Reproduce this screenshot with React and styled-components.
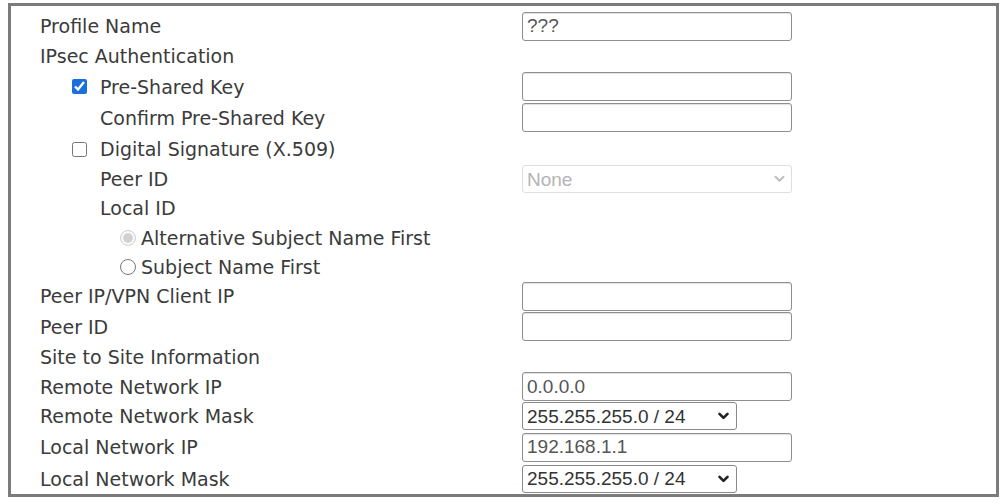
import React from "react";
import styled, { createGlobalStyle } from "styled-components";

const Global = createGlobalStyle`
  html, body { margin: 0; padding: 0; background: #fff; }
  body { font-family: "DejaVu Sans", Verdana, sans-serif; }
`;

const Page = styled.div`
  padding: 3px 0 0 8px;
`;

const Frame = styled.div`
  box-sizing: border-box;
  width: 991px;
  border: 3px solid #7b7b7b;
  padding: 5px 0 0 29px;
  background: #fff;
`;

const Row = styled.div`
  display: grid;
  grid-template-columns: 482px 1fr;
  align-items: center;
  height: ${(p) => p.$h || 30}px;
`;

const Label = styled.div`
  display: flex;
  align-items: center;
  padding-left: ${(p) => p.$indent || 0}px;
  font-size: 19px;
  color: #3b3b3b;
  white-space: nowrap;
`;

const Check = styled.input.attrs({ type: "checkbox" })`
  width: 15px;
  height: 15px;
  margin: 0 13px 0 0;
  accent-color: #1a6fdc;
`;

const Radio = styled.input.attrs({ type: "radio" })`
  width: 16px;
  height: 16px;
  margin: 0 5px 0 0;
`;

const TextInput = styled.input.attrs({ type: "text" })`
  box-sizing: border-box;
  width: 270px;
  height: 29px;
  border: 1px solid #8f8f8f;
  border-radius: 3px;
  box-shadow: inset 0 1px 1px rgba(0, 0, 0, 0.12);
  padding: 0 4px;
  font-family: "Liberation Sans", Arial, sans-serif;
  font-size: 19px;
  color: #555;
  outline: none;
`;

const SelectWrap = styled.div`
  position: relative;
  width: ${(p) => p.$w}px;
  height: 28px;
`;

const Select = styled.select`
  appearance: none;
  box-sizing: border-box;
  width: 100%;
  height: 100%;
  border: 1px solid ${(p) => (p.disabled ? "#dedede" : "#8a8a8a")};
  border-radius: 3px;
  background: #fff;
  padding: 0 4px;
  font-family: "Liberation Sans", Arial, sans-serif;
  font-size: 19px;
  color: ${(p) => (p.disabled ? "#b4b4b4" : "#333")};
  opacity: 1;
`;

const Chevron = styled.svg`
  position: absolute;
  right: ${(p) => p.$r}px;
  top: 50%;
  transform: translateY(-50%);
  pointer-events: none;
`;

function Dropdown({ w, value, disabled, r = 8, color = "#222", sw = 2.6 }) {
  return (
    <SelectWrap $w={w}>
      <Select disabled={disabled} defaultValue={value}>
        <option>{value}</option>
      </Select>
      <Chevron $r={r} width="11" height="8" viewBox="0 0 11 8">
        <path d="M1.5 1.8 L5.5 5.8 L9.5 1.8" fill="none" stroke={color} strokeWidth={sw} strokeLinecap="round" strokeLinejoin="round" />
      </Chevron>
    </SelectWrap>
  );
}

export default function App() {
  return (
    <Page>
      <Global />
      <Frame>
        <Row $h={30}>
          <Label>Profile Name</Label>
          <TextInput defaultValue="???" />
        </Row>
        <Row $h={30}>
          <Label>IPsec Authentication</Label>
        </Row>
        <Row $h={31}>
          <Label $indent={32}>
            <Check defaultChecked />
            Pre-Shared Key
          </Label>
          <TextInput />
        </Row>
        <Row $h={31}>
          <Label $indent={60}>Confirm Pre-Shared Key</Label>
          <TextInput />
        </Row>
        <Row $h={32}>
          <Label $indent={32}>
            <Check />
            Digital Signature (X.509)
          </Label>
        </Row>
        <Row $h={28}>
          <Label $indent={60}>Peer ID</Label>
          <Dropdown w={270} value="None" disabled r={7} color="#bdbdbd" sw={2} />
        </Row>
        <Row $h={30}>
          <Label $indent={60}>Local ID</Label>
        </Row>
        <Row $h={30}>
          <Label $indent={80}>
            <Radio disabled defaultChecked name="lid" />
            Alternative Subject Name First
          </Label>
        </Row>
        <Row $h={28}>
          <Label $indent={80}>
            <Radio name="lid2" />
            Subject Name First
          </Label>
        </Row>
        <Row $h={30}>
          <Label>Peer IP/VPN Client IP</Label>
          <TextInput />
        </Row>
        <Row $h={31}>
          <Label>Peer ID</Label>
          <TextInput />
        </Row>
        <Row $h={30}>
          <Label>Site to Site Information</Label>
        </Row>
        <Row $h={29}>
          <Label>Remote Network IP</Label>
          <TextInput defaultValue="0.0.0.0" />
        </Row>
        <Row $h={30}>
          <Label>Remote Network Mask</Label>
          <Dropdown w={215} value="255.255.255.0 / 24" />
        </Row>
        <Row $h={32}>
          <Label>Local Network IP</Label>
          <TextInput defaultValue="192.168.1.1" />
        </Row>
        <Row $h={31}>
          <Label>Local Network Mask</Label>
          <Dropdown w={215} value="255.255.255.0 / 24" />
        </Row>
      </Frame>
    </Page>
  );
}
